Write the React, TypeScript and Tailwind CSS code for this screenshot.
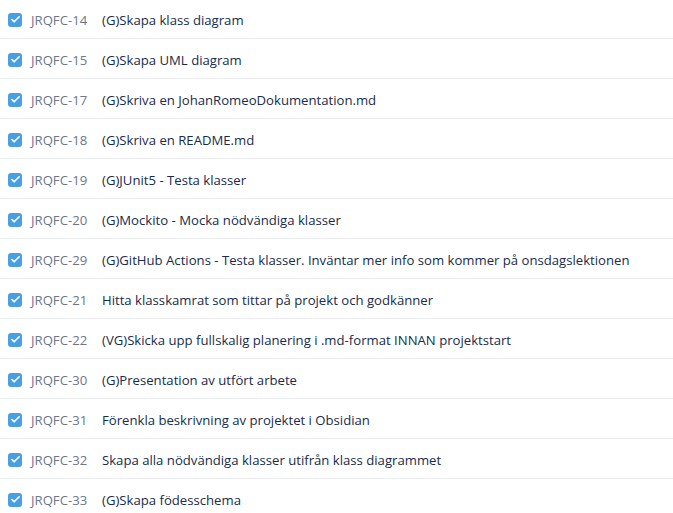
import { Check } from "lucide-react";

interface Issue {
  key: string;
  summary: string;
}

const issues: Issue[] = [
  { key: "JRQFC-14", summary: "(G)Skapa klass diagram" },
  { key: "JRQFC-15", summary: "(G)Skapa UML diagram" },
  { key: "JRQFC-17", summary: "(G)Skriva en JohanRomeoDokumentation.md" },
  { key: "JRQFC-18", summary: "(G)Skriva en README.md" },
  { key: "JRQFC-19", summary: "(G)JUnit5 - Testa klasser" },
  { key: "JRQFC-20", summary: "(G)Mockito - Mocka nödvändiga klasser" },
  {
    key: "JRQFC-29",
    summary:
      "(G)GitHub Actions - Testa klasser. Inväntar mer info som kommer på onsdagslektionen",
  },
  { key: "JRQFC-21", summary: "Hitta klasskamrat som tittar på projekt och godkänner" },
  {
    key: "JRQFC-22",
    summary: "(VG)Skicka upp fullskalig planering i .md-format INNAN projektstart",
  },
  { key: "JRQFC-30", summary: "(G)Presentation av utfört arbete" },
  { key: "JRQFC-31", summary: "Förenkla beskrivning av projektet i Obsidian" },
  { key: "JRQFC-32", summary: "Skapa alla nödvändiga klasser utifrån klass diagrammet" },
  { key: "JRQFC-33", summary: "(G)Skapa födesschema" },
];

export default function App() {
  return (
    <div className="h-[513px] w-[673px] overflow-hidden bg-white font-['Open_Sans',sans-serif] text-[13.15px]">
      <div className="-mt-px flex flex-col">
        {issues.map((issue) => (
          <div
            key={issue.key}
            className="flex h-[40px] shrink-0 items-center border-b border-[#ebecf0] pl-2 pt-[4px]"
          >
            <div className="-mt-[2px] flex h-[14px] w-[14px] items-center justify-center rounded-[3px] bg-[#4a9fe3]">
              <Check className="h-[11px] w-[11px] text-white" strokeWidth={3.5} />
            </div>
            <span className="ml-[9px] w-[71px] text-[#6b778c]">{issue.key}</span>
            <span className="text-[#172b4d]">{issue.summary}</span>
          </div>
        ))}
      </div>
    </div>
  );
}
